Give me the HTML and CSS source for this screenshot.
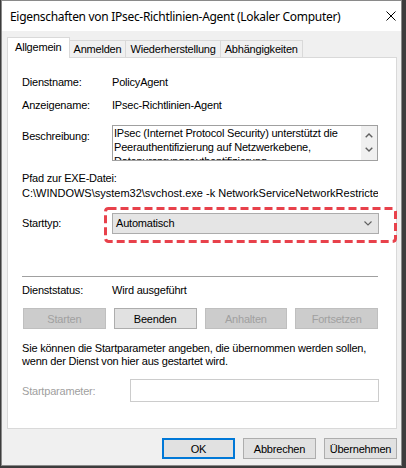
FILE: index.html
```html
<!DOCTYPE html>
<html lang="de">
<head>
<meta charset="utf-8">
<title>Eigenschaften von IPsec-Richtlinien-Agent</title>
<link rel="stylesheet" href="styles.css">
</head>
<body>
<div class="window">
  <div class="titlebar">
    <span class="title">Eigenschaften von IPsec-Richtlinien-Agent (Lokaler Computer)</span>
    <svg class="close" width="10" height="10" viewBox="0 0 10 10"><path d="M0.5 0.5 L9.5 9.5 M9.5 0.5 L0.5 9.5" stroke="#000" stroke-width="1" fill="none"/></svg>
  </div>
  <div class="content">
    <div class="tabs">
      <div class="tab active">Allgemein</div>
      <div class="tab">Anmelden</div>
      <div class="tab">Wiederherstellung</div>
      <div class="tab">Abhängigkeiten</div>
    </div>
    <div class="panel">
      <div class="row r-name"><span class="lbl">Dienstname:</span><span>PolicyAgent</span></div>
      <div class="row r-display"><span class="lbl">Anzeigename:</span><span>IPsec-Richtlinien-Agent</span></div>
      <div class="row r-desc">
        <span class="lbl lbl-desc">Beschreibung:</span>
        <div class="descbox">
          <div class="desctext">IPsec (Internet Protocol Security) unterstützt die Peerauthentifizierung auf Netzwerkebene, Datenursprungsauthentifizierung,</div>
          <div class="scroll">
            <svg width="8" height="5" viewBox="0 0 8 5"><path d="M0.7 4.3 L4 1 L7.3 4.3" stroke="#606060" stroke-width="1.4" fill="none"/></svg>
            <svg width="8" height="5" viewBox="0 0 8 5"><path d="M0.7 0.7 L4 4 L7.3 0.7" stroke="#606060" stroke-width="1.4" fill="none"/></svg>
          </div>
        </div>
      </div>
      <div class="path">
        <div>Pfad zur EXE-Datei:</div>
        <div class="pathval">C:\WINDOWS\system32\svchost.exe -k NetworkServiceNetworkRestricted -p</div>
      </div>
      <div class="row r-start">
        <span class="lbl">Starttyp:</span>
        <div class="combo">
          <span>Automatisch</span>
          <svg width="8" height="5" viewBox="0 0 8 5"><path d="M0.5 0.5 L4 4 L7.5 0.5" stroke="#606060" stroke-width="1.1" fill="none"/></svg>
          <svg class="highlight" width="293" height="36" viewBox="0 0 293 36"><rect x="1.5" y="1.5" width="290" height="33" rx="3" ry="3" fill="none" stroke="#e8414b" stroke-width="3" stroke-dasharray="8 4"/></svg>
        </div>
      </div>
      <div class="sep"></div>
      <div class="row r-status"><span class="lbl">Dienststatus:</span><span>Wird ausgeführt</span></div>
      <div class="svcbuttons">
        <div class="btn disabled">Starten</div>
        <div class="btn">Beenden</div>
        <div class="btn disabled">Anhalten</div>
        <div class="btn disabled">Fortsetzen</div>
      </div>
      <p class="note">Sie können die Startparameter angeben, die übernommen werden sollen,<br>wenn der Dienst von hier aus gestartet wird.</p>
      <div class="params">
        <span class="lbl grey">Startparameter:</span>
        <div class="input"></div>
      </div>
    </div>
    <div class="actions">
      <div class="btn dlg default">OK</div>
      <div class="btn dlg">Abbrechen</div>
      <div class="btn dlg">Übernehmen</div>
    </div>
  </div>
</div>
</body>
</html>
```

FILE: styles.css
```css
html, body {
  margin: 0;
  padding: 0;
}
body {
  background: #3c3c3c;
  font-family: "Liberation Sans", Arial, sans-serif;
  font-size: 11px;
  letter-spacing: -0.2px;
  color: #000;
}
.window {
  margin-left: 1px;
  width: 401px;
  height: 466px;
  box-sizing: border-box;
  border: 1px solid #8a8a8a;
  background: #f0f0f0;
  display: flex;
  flex-direction: column;
}
.titlebar {
  height: 30px;
  background: #fff;
  display: flex;
  align-items: center;
  padding-left: 8px;
}
.title {
  font-family: "Noto Sans", "Open Sans", sans-serif;
  font-size: 12px;
  letter-spacing: -0.3px;
  color: #000;
  white-space: nowrap;
}
.close {
  margin-left: auto;
  margin-right: 5px;
}
.content {
  padding: 6px 4px 0 5px;
}
.tabs {
  display: flex;
  align-items: flex-end;
  height: 21px;
  margin-bottom: -1px;
  position: relative;
  z-index: 1;
}
.tab {
  height: 18px;
  box-sizing: border-box;
  border: 1px solid #d9d9d9;
  margin-left: -1px;
  padding: 0 4px;
  line-height: 16px;
  background: #f0f0f0;
  white-space: nowrap;
}
.tab.active {
  height: 21px;
  margin-left: 0;
  padding: 0 7px;
  line-height: 19px;
  background: #fff;
  border-bottom: none;
  position: relative;
  z-index: 2;
}
.panel {
  background: #fff;
  border: 1px solid #d9d9d9;
  height: 372px;
  box-sizing: border-box;
  padding: 17px 18px 0 14px;
}
.row {
  display: grid;
  grid-template-columns: 90px 1fr;
  line-height: 15px;
}
.r-display { margin-top: 8px; }
.r-desc { margin-top: 12px; align-items: start; }
.lbl-desc { padding-top: 4px; }
.descbox {
  height: 36px;
  box-sizing: border-box;
  border: 1px solid #a0a0a0;
  display: flex;
  overflow: hidden;
}
.desctext {
  flex: 1;
  line-height: 14px;
  padding-left: 1px;
  padding-right: 4px;
}
.scroll {
  width: 16px;
  background: #f0f0f0;
  display: flex;
  flex-direction: column;
  align-items: center;
  justify-content: space-around;
  padding: 3px 0 4px;
}
.scroll svg { display: block; }
.path {
  margin-top: 10px;
  line-height: 15px;
}
.pathval {
  white-space: nowrap;
  overflow: hidden;
  letter-spacing: 0;
}
.r-start {
  margin-top: 12px;
  align-items: center;
}
.combo {
  position: relative;
  height: 21px;
  box-sizing: border-box;
  margin-right: -1px;
  background: #e5e5e5;
  border: 1px solid #acacac;
  display: flex;
  align-items: center;
  justify-content: space-between;
  padding: 0 6px 0 3px;
}
.combo svg { display: block; }
.combo .highlight {
  position: absolute;
  left: -9px;
  top: -7px;
}
.sep {
  margin-top: 42px;
  height: 1px;
  background: #a0a0a0;
}
.r-status { margin-top: 6px; }
.svcbuttons {
  margin-top: 10px;
  margin-left: 1px;
  display: grid;
  grid-template-columns: repeat(4, 1fr);
  gap: 8px;
}
.btn {
  height: 21px;
  box-sizing: border-box;
  border: 1px solid #adadad;
  background: #e1e1e1;
  display: flex;
  align-items: center;
  justify-content: center;
}
.btn.disabled {
  background: #cccccc;
  border-color: #bfbfbf;
  color: #a0a0a0;
}
.note {
  margin: 13px 0 0;
  line-height: 13px;
  white-space: nowrap;
}
.params {
  margin-top: 11px;
  display: grid;
  grid-template-columns: 108px 1fr;
  align-items: center;
}
.grey { color: #a0a0a0; }
.input {
  height: 23px;
  box-sizing: border-box;
  margin-right: -1px;
  border: 1px solid #cccccc;
  background: #fff;
}
.actions {
  margin-top: 9px;
  display: flex;
  justify-content: flex-end;
  gap: 8px;
}
.btn.dlg {
  width: 73px;
}
.btn.default {
  border: 2px solid #0078d7;
}
```
